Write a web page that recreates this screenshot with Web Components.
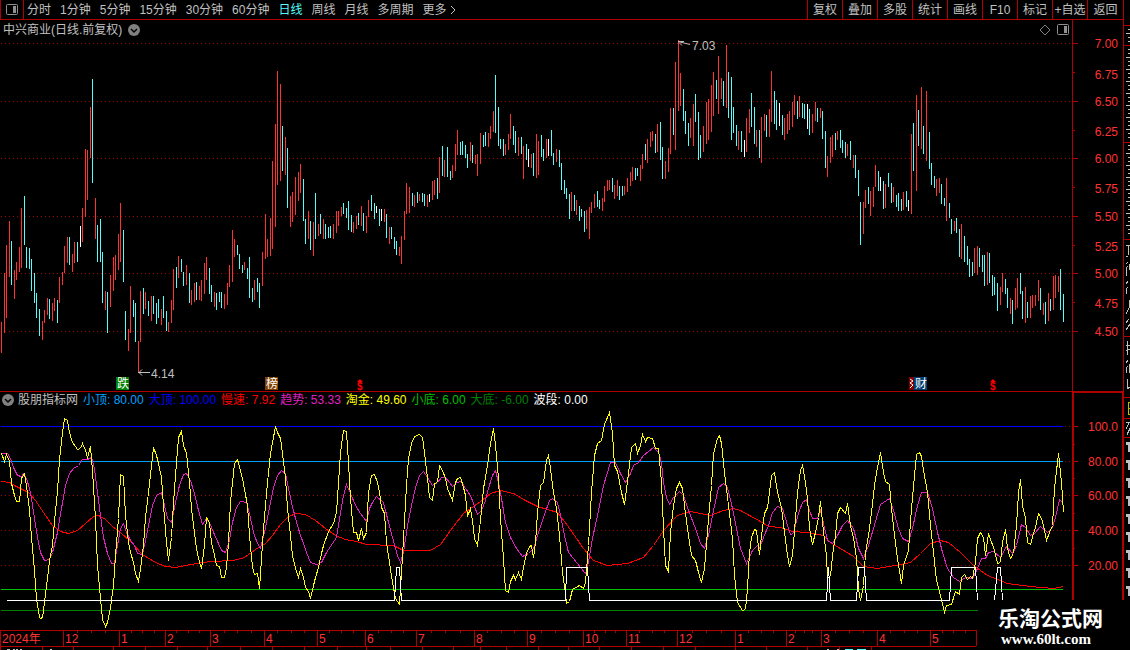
<!DOCTYPE html>
<html lang="zh-CN">
<head>
<meta charset="utf-8">
<title>中兴商业 日线</title>
<style>
  html, body {
    margin: 0;
    height: 100%;
    background: #000;
    overflow: hidden;
  }

  body {
    --line: #b00000;
    --grid: #a00000;
    --text: #c0c0c0;
    --up: #ff3232;
    --down: #54fcfc;
    font: 12px/14px "Liberation Sans", "Noto Sans CJK SC", sans-serif;
    color: var(--text);
  }
</style>
</head>
<body>
<stock-terminal></stock-terminal>

<script>
// Horizontal design width of a plot, data x values are given on this scale
const PLOT_WIDTH = 1072;

// Price bars: x, kind (r = up, c = down, w = flat), high, low
const BARS = `
1r322-353 4r273-333 6r245-318 9r221-277 11c241-285 14r270-299 16r262-280 19r247-272 21r208-268 24c196-245
26c247-268 29c248-269 31c259-291 34c273-303 36c293-318 39c309-336 42r321-340 44r310-323 47r298-315 49c299-319
52r303-321 54r298-311 57c300-323 59r277-303 62r272-285 64r246-273 67r237-263 69c237-265 72r254-272 74r242-263
77c242-262 80w226-247 82r208-242 85r149-217 87r150-200 90r107-158 92c79-183 95r198-239 97c225-262 100c219-262
102c252-303 105r291-310 107c292-333 110r275-307 113r257-291 115r255-280 118r234-270 120r203-262 123c230-282
125c311-340 128r329-351 130r286-333 133c300-317 135c303-342 138r341-372 140r291-342 143c288-314 145r292-309
148c301-316 151r296-321 153c296-314 156c303-324 158c299-318 161r309-325 163c296-318 166c311-331 168r322-332
171r300-323 173r269-310 176c267-288 178r256-278 181c259-272 183c272-286 186r265-285 189c273-303 191r290-305
194r283-302 196c282-300 199r286-300 201r280-301 204r263-294 206r257-280 209c268-294 211c285-302 214r292-307
216c293-310 219c292-302 221c292-308 224r294-309 227r283-305 229r265-287 232r230-282 234r239-257 237c245-255
239c254-269 242c265-273 244r262-270 247c268-279 249c257-298 252c288-302 254r280-300 257c278-292 259c283-308
262r252-286 265r214-259 267r239-257 270r218-256 272r161-249 275r124-227 277r71-185 280r84-181 282c126-171
285r137-175 287c148-208 290r196-227 292r192-222 295r177-215 298r172-201 300r164-193 303c179-221 305c219-244
308r211-239 310c221-250 313r222-256 315c193-239 318r224-236 320c214-234 323r219-239 325c224-239 328c227-238
330c226-238 333r224-239 336r211-233 338r211-226 341r207-216 343c203-214 346c208-218 348c201-230 351c215-232
353r222-233 356r216-229 358c213-225 361r206-226 363c213-231 366r216-233 368r200-217 371c195-211 374c203-219
376w206-213 379c209-226 381w209-221 384r209-222 386c214-238 389r227-244 391c227-239 394c237-249 396c241-255
399r247-256 401r236-264 404r211-240 406r183-214 409r187-213 412c193-206 414r195-207 417c192-203 419r194-201
422c193-202 424c194-206 427r195-207 429w194-202 432r181-200 434r180-195 437c178-199 439r157-193 442c146-176
444r160-177 447c147-177 450c171-180 452r165-178 455r144-171 457r130-155 460c142-155 462c141-155 465c145-158
467c154-168 470r142-161 472c145-163 475r155-164 477r154-176 480r133-164 483c135-147 485c132-146 488r133-147
490r126-139 493r111-132 495c75-133 498c107-146 500c139-149 503c139-156 505r144-155 508r134-150 510r114-139
513c126-145 515c131-153 518r137-156 521c137-154 523r146-179 526c144-160 528w149-167 531r154-168 533c153-176
536r134-178 538r141-175 541c135-157 543c149-161 546r139-158 548w139-156 551c130-156 553c153-165 556r149-162
559c150-167 561c163-190 564c180-194 566c188-199 569c194-219 571r192-211 574c195-211 576r200-215 579c206-221
581c209-217 584c211-232 586r210-229 589r207-239 591r202-213 594r194-208 597c191-207 599c200-209 602r198-211
604r186-202 607r180-191 609r180-190 612c178-192 614r185-199 617r180-196 619c186-200 622c186-196 624r186-195
627r178-192 630r172-186 632r167-181 635c168-180 637c168-176 640r165-181 642r154-169 645c144-160 647r139-163
650r132-147 652r131-141 655c134-153 657r124-152 660c122-160 662c147-179 665r161-179 668r148-172 670r108-154
673c108-135 675r62-150 678r40-111 680r73-106 683c89-121 685c111-134 688c123-146 690r118-138 693r104-146
695c94-122 698c112-160 700c135-158 703r126-152 706r102-144 708r99-140 711r85-132 713r72-116 716c80-99
718r56-114 721r78-99 723c81-106 726r45-108 728c72-118 731c77-140 733c107-133 736c125-146 738r131-150
741c131-152 744w140-157 746r118-152 749r109-133 751c93-127 754c107-144 756r130-147 759c130-158 761r117-163
764r114-131 766c115-137 769r109-137 771r71-122 774c91-124 776c100-130 779w103-126 782c115-135 784r118-140
787r114-134 789r111-130 792r102-127 794r95-115 797c101-119 799r96-117 802c103-118 804c104-119 807w104-129
809c109-135 812r114-133 815r102-121 817c108-122 820r108-118 822c111-139 825c131-168 827r156-177 830r137-163
832r135-157 835c133-150 837r131-140 840c130-148 842c140-153 845c142-158 847r144-156 850c141-160 853r155-168
855c155-178 858c170-196 860c202-245 863r202-234 865r190-208 868c187-204 870r191-216 873r187-207 875r165-187
878c171-191 880w177-191 883c181-209 885r184-208 888c173-187 891c183-203 893r187-202 896c195-207 898c193-211
901c199-211 903r192-210 906c191-207 908w200-211 911r134-214 913c123-171 916r95-191 918c110-146 921r87-149
923c126-154 926r91-161 929c132-169 931c163-185 934c176-188 936r179-196 939r178-193 941c184-204 944c198-206
946r178-221 949c203-218 951c219-234 954r221-231 956c218-233 959c229-257 961r224-259 964c236-262 967c246-265
969c259-277 972c262-276 974r248-273 977r246-275 979c248-267 982c255-272 984c255-286 987r252-285 989c253-283
992c275-296 994c277-295 997c283-311 1000r287-305 1002r273-292 1005c279-294 1007c288-308 1010r298-314
1012c300-324 1015r288-310 1017r278-308 1020c273-294 1022c291-319 1025r287-323 1027c302-318 1030r296-318
1032r295-308 1035r295-306 1038r280-301 1040c288-310 1043r303-315 1045c302-324 1048r293-321 1050c299-311
1053r276-310 1055r275-298 1058r276-292 1060c269-310 1063c294-322`;

// Indicator curves as x,y pairs
const SLOW = `1,481 9,482 16,486 22,489 28,492 35,500 43,512 52,525 60,531 68,533 77,530 85,523 93,516 98,515
105,519 112,526 120,532 130,541 142,554 155,562 165,566 175,567 190,564 210,561 233,560 244,557 255,549
265,543 272,535 280,524 288,516 296,513 305,514 315,520 325,528 335,535 345,539 356,541 366,544 393,545
403,550 430,550 440,544 450,530 463,513 480,501 490,493 500,490 513,493 525,500 537,506 557,512 567,525
583,548 593,560 607,565 627,563 643,557 653,545 663,530 677,515 690,511 710,515 723,510 733,508 740,510
749,515 760,521 768,526 780,527 792,531 807,532 823,535 830,542 853,556 863,566 877,568 900,564 910,562
920,553 930,543 940,540 948,542 960,552 973,565 987,575 1007,583 1030,586 1053,588 1063,586`;

const TREND = `1,453 7,453 10,458 13,467 17,475 21,476 23,473 26,478 29,488 31,498 34,518 37,537 40,552 44,560
49,559 52,552 57,532 61,508 65,485 69,473 73,468 78,465 82,459 87,459 91,457 94,468 97,492 100,515 103,537
107,553 111,563 114,563 117,545 120,528 123,523 126,532 130,540 134,545 137,553 142,554 145,540 148,525
152,505 156,495 161,492 164,505 167,518 171,522 175,502 179,485 183,474 186,473 190,480 194,493 198,510
202,524 206,518 209,522 213,532 218,543 221,550 225,552 229,540 232,522 236,507 240,501 246,502 249,513
253,532 257,543 260,548 264,532 268,512 273,487 277,475 281,470 285,473 287,483 291,502 295,518 300,535
303,543 306,552 310,562 316,564 321,562 326,552 336,537 339,518 343,495 346,484 350,493 355,505 360,513
366,521 369,508 372,502 376,496 383,502 388,522 392,537 397,555 400,562 403,552 407,525 411,505 415,487
419,475 423,471 427,477 432,485 437,482 441,477 445,477 449,482 452,486 456,482 461,481 465,488 470,495
473,503 477,514 481,510 485,500 488,488 492,475 495,470 498,482 501,498 505,522 510,537 516,548 522,556
528,553 533,548 538,532 543,517 549,500 552,498 557,502 560,515 564,535 568,552 573,558 580,567 585,573
588,562 592,538 597,515 603,485 610,462 615,462 620,473 625,482 630,473 633,465 638,462 643,455 653,447
658,452 661,462 663,482 666,497 669,504 673,497 679,491 683,495 688,510 695,528 700,543 704,548 708,535
713,510 718,487 723,483 727,487 732,508 736,528 740,548 746,563 752,550 757,545 759,548 763,537 768,525
772,512 777,506 782,508 787,525 790,534 793,533 798,513 802,502 806,499 808,507 812,518 817,518 820,510
823,523 827,540 832,543 837,535 842,525 847,520 853,528 858,548 863,558 868,545 873,528 880,504 889,498
893,510 898,528 902,538 908,541 912,528 917,505 921,492 927,492 932,508 937,532 942,552 947,568 953,577
959,581 965,577 972,578 977,568 981,558 985,558 988,552 993,551 1000,557 1006,546 1012,553 1016,545
1021,524 1025,527 1030,535 1035,532 1040,526 1047,532 1052,527 1056,513 1059,499 1063,503`;

const FAST = `1,453 4,461 6,454 9,461 11,483 14,495 16,501 19,501 21,478 24,473 26,485 29,509 31,537 34,570
36,598 39,617 40,618 42,617 44,602 47,578 49,560 52,545 54,521 57,490 59,459 62,432 64,418 67,420 69,432
72,442 75,446 77,449 80,448 82,443 85,450 87,457 90,446 92,470 95,518 97,565 100,598 102,619 105,626
107,622 110,607 113,585 115,555 118,518 120,474 123,476 125,515 128,542 130,552 133,562 135,573 138,581
140,568 143,545 145,517 148,492 151,465 153,447 156,455 158,463 161,477 163,505 166,542 168,560 171,537
173,502 176,462 178,437 181,431 183,445 186,453 189,482 191,508 194,532 196,548 199,562 201,568 204,545
206,517 209,522 211,542 214,555 216,565 219,566 221,577 224,577 226,567 228,542 230,502 232,482 234,463
237,459 242,478 247,505 249,535 252,567 254,574 257,573 259,588 261,558 263,528 265,505 267,482 270,453
275,426 277,432 280,438 282,453 285,478 287,508 290,535 292,555 295,568 298,577 300,568 303,577 305,587
308,591 310,598 313,585 315,577 318,567 321,553 323,545 328,531 333,523 336,512 338,482 340,452 343,430
346,431 348,462 350,498 353,532 356,532 358,540 361,528 363,538 366,532 368,492 371,475 374,474 377,482
379,492 381,507 384,513 386,542 389,562 392,582 395,598 399,604 401,572 403,538 406,485 408,458 411,443
414,436 419,434 422,437 424,452 427,478 429,497 432,500 434,483 437,482 439,465 442,470 445,478 447,488
452,500 455,482 457,478 460,477 463,487 465,495 467,516 470,508 472,520 474,538 477,545 480,520 483,488
487,465 490,443 493,428 495,445 498,478 500,518 503,558 505,590 508,592 510,581 513,575 515,579 518,572
521,579 523,567 526,553 529,546 531,545 533,557 535,542 537,512 540,485 543,482 546,460 548,455 550,468
553,492 556,508 559,535 562,572 565,593 566,603 569,601 572,589 579,585 583,588 585,582 588,545 591,492
594,455 597,443 601,440 604,424 609,412 612,433 614,465 617,471 621,492 624,504 628,473 631,447 635,443
637,453 640,445 642,434 645,441 647,437 652,438 655,448 658,448 661,482 663,528 665,565 668,571 670,532
673,505 676,488 679,482 682,488 685,513 688,535 691,555 695,560 698,572 701,582 704,568 708,518 711,485
713,453 717,438 719,435 721,443 724,472 728,505 732,538 734,575 737,602 742,610 745,609 747,588 749,552
751,537 754,529 756,530 759,554 761,535 764,513 767,507 769,492 771,475 774,472 777,492 781,507 784,532
787,555 789,566 792,555 795,518 797,492 800,470 802,465 805,482 807,498 809,528 812,544 815,532 818,517
820,501 823,532 826,555 827,578 830,576 832,555 835,535 837,513 840,507 845,513 847,503 850,525 853,537
856,558 858,588 860,600 863,585 865,552 868,535 871,512 874,485 877,467 880,452 883,472 885,481 889,484
891,508 894,535 897,558 901,583 903,565 908,550 911,508 914,475 916,454 919,452 921,456 923,470 927,492
930,525 933,552 936,580 940,595 944,612 946,605 951,604 955,591 959,594 961,577 964,574 967,579 970,576
972,578 975,562 977,538 980,532 983,537 985,555 988,533 994,550 997,563 1000,562 1002,542 1005,529
1007,548 1010,558 1013,553 1016,525 1018,492 1020,479 1022,505 1025,518 1027,542 1030,544 1033,533
1035,527 1038,513 1041,518 1043,525 1046,540 1049,532 1052,525 1054,488 1058,453 1061,482 1063,512`;

const WAVE = `6,600 394,600 396,567 399,567 401,600 565,600 566,567 587,567 589,600 826,600 828,567 830,600
856,600 858,567 864,567 866,600 949,600 951,567 975,567 977,600`;
const WAVE_TAIL = '994,600 997,567 1000,567 1002,600';

const PRICES = [
  ['7.00', 43], ['6.75', 74], ['6.50', 101], ['6.25', 131], ['6.00', 158], ['5.75', 188],
  ['5.50', 216], ['5.25', 246], ['5.00', 273], ['4.75', 303], ['4.50', 331]
];
const LEVELS = [['100.0', 426], ['80.00', 461], ['60.00', 495], ['40.00', 530], ['20.00', 565]];

const MONTHS = [
  [0, '2024年'], [63, '12'], [119, '1'], [165, '2'], [210, '3'], [264, '4'], [317, '5'], [365, '6'],
  [416, '7'], [474, '8'], [527, '9'], [583, '10'], [626, '11'], [677, '12'], [735, '1'], [786, '2'],
  [821, '3'], [877, '4'], [930, '5'], [976, '']
];
const LOWER_TICKS = [
  0, 42, 73, 113, 145, 177, 207, 240, 272, 304, 337, 366, 390, 422, 453, 480, 506, 538, 568, 599,
  631, 663, 695, 735, 766, 807, 839, 871
];

const LEGEND = [
  ['小顶', '80.00', '#00a0ff'], ['大顶', '100.00', '#0000ff'], ['慢速', '7.92', '#ff0000'],
  ['趋势', '53.33', '#e020c0'], ['淘金', '49.60', '#ffff00'], ['小底', '6.00', '#00c000'],
  ['大底', '-6.00', '#008000'], ['波段', '0.00', '#ffffff']
];

const CHEVRON_BADGE = `
  <svg width="12" height="12" viewBox="0 0 12 12" aria-hidden="true">
    <circle cx="6" cy="6" r="6" fill="#808080"/>
    <path d="M3 5l3 3 3-3" fill="none" stroke="#000" stroke-width="1.5"/>
  </svg>`;

const PANE_ICON = `
  <svg width="13" height="12" viewBox="0 0 13 12" aria-hidden="true">
    <rect x="0.5" y="0.5" width="11" height="10" rx="1" fill="none" stroke="#909090"/>
    <rect x="7" y="2" width="3" height="7" fill="#909090"/>
  </svg>`;

// Base class: an SVG that is redrawn when its width changes
class PlotElement extends HTMLElement {
  constructor() {
    super();
    this.attachShadow({ mode: 'open' });
  }

  connectedCallback() {
    this.render();
    this._observer = new ResizeObserver(() => this.render());
    this._observer.observe(this);
  }

  disconnectedCallback() {
    this._observer.disconnect();
  }

  get ratio() {
    return (this.clientWidth || PLOT_WIDTH) / PLOT_WIDTH;
  }

  x(value) {
    return Math.round(value * this.ratio);
  }

  polyline(points, color) {
    const shifted = points.trim().split(/\s+/).map(pair => {
      const [px, py] = pair.split(',').map(Number);
      return `${this.x(px) + 0.5},${py + 0.5}`;
    }).join(' ');
    return `<polyline points="${shifted}" fill="none" stroke="${color}"/>`;
  }

  hline(y, x1, x2, color) {
    return `<path d="M${this.x(x1)} ${y}.5H${this.x(x2)}" stroke="${color}"/>`;
  }

  dotted(y) {
    return `<path d="M1 ${y}.5H${this.x(PLOT_WIDTH)}" stroke="var(--grid)" stroke-dasharray="1 3"/>`;
  }

  draw(top, height, content) {
    this.shadowRoot.innerHTML = `
    <style>
      :host {
        display: block;
        overflow: hidden;
      }

      svg {
        display: block;
        width: 100%;
        height: ${height}px;
        font: inherit;
      }

      .lines {
        shape-rendering: crispEdges;
      }
    </style>
    <svg><g transform="translate(0 ${-top})">${content}</g></svg>
  `;
  }
}

class PriceChart extends PlotElement {
  render() {
    const fills = { r: 'var(--up)', c: 'var(--down)', w: '#fff' };
    const bars = BARS.trim().split(/\s+/).map(item => {
      const [, bx, kind, high, low] = item.match(/(\d+)([rcw])(\d+)-(\d+)/);
      return `<rect x="${this.x(bx)}" y="${high}" width="1" height="${low - high}" fill="${fills[kind]}"/>`;
    }).join('');
    const grid = [43, 101, 158, 216, 273, 331].map(y => this.dotted(y)).join('');

    this.draw(20, 371, `
      <g class="lines">${grid}${bars}</g>
      <g fill="none" stroke="#c0c0c0">
        <path d="M${this.x(138)} 372.5h12m-8-3l-3 3 3 3"/>
        <path d="M${this.x(678)} 41.5l6 0m-6 0l12 3m-11-2l3 3"/>
      </g>
      <g fill="#c0c0c0">
        <text x="${this.x(151)}" y="378">4.14</text>
        <text x="${this.x(692)}" y="50">7.03</text>
      </g>
      ${this.mark(116, '跌', '#008000')}
      ${this.mark(265, '榜', '#804000')}
      <rect x="${this.x(909)}" y="377" width="5" height="13" fill="#800000"/>
      <path d="M${this.x(910)} 379l3 2-3 2 3 2-3 3" fill="none" stroke="#fff"/>
      ${this.mark(914, '财', '#003c70')}
      ${this.dividend(357)}
      ${this.dividend(990)}
    `);
  }

  mark(x, label, color) {
    const left = this.x(x);
    return `
      <rect x="${left}" y="377" width="13" height="13" fill="${color}"/>
      <text x="${left + 1}" y="388" fill="#fff">${label}</text>`;
  }

  dividend(x) {
    const left = this.x(x);
    return `
      <path d="M${left} 382l3-3 3 3z" fill="#f00"/>
      <text x="${left}" y="390" fill="#f00" font-size="10" font-weight="bold">$</text>`;
  }
}

class IndicatorChart extends PlotElement {
  render() {
    const grid = [426, 461, 495, 530, 565].map(y => this.dotted(y)).join('');
    this.draw(392, 238, `
      <g class="lines">
        ${grid}
        ${this.hline(426, 1, 1063, '#0000ff')}
        ${this.hline(461, 1, 1063, '#00a0ff')}
        ${this.hline(589, 1, 1063, '#00c000')}
        ${this.hline(610, 1, 978, '#008000')}
        ${this.polyline(SLOW, '#ff0000')}
        ${this.polyline(TREND, '#e020c0')}
        ${this.polyline(FAST, '#ffff00')}
        ${this.polyline(WAVE, '#ffffff')}
        ${this.polyline(WAVE_TAIL, '#ffffff')}
      </g>
    `);
  }
}

class TimeAxis extends PlotElement {
  render() {
    const end = this.x(976);
    const separators = MONTHS.map(([mx]) => `M${this.x(mx)}.5 630v16`).join('');
    // Three week marks between two month separators
    const weeks = MONTHS.slice(1, -1).map(([mx], i) => {
      const next = MONTHS[i + 2][0];
      return [1, 2, 3].map(q => `M${this.x(mx + (next - mx) * q / 4)}.5 630v3`).join('');
    }).join('');
    const labels = MONTHS.map(([mx, label]) =>
      label ? `<text x="${this.x(mx) + 2}" y="643">${label}</text>` : '').join('');
    const lower = LOWER_TICKS.map(t => `M${this.x(t)}.5 647v3`).join('');

    this.draw(630, 20, `
      <path class="lines" fill="none" stroke="var(--line)"
        d="M0 630.5H${end}M0 646.5H${end}${separators}${weeks}${lower}"/>
      <g class="lines">
        <path d="M7 649.5h3m3 0h2m1 0h2m2 0h2m28 0h2" stroke="#c0c0c0"/>
        <path d="M${this.x(827)} 649.5h2m8 0h2" stroke="#c0c0c0"/>
        <path d="M${this.x(845)} 649.5h8m4 0h9" stroke="#54fcfc"/>
      </g>
      <g fill="var(--up)">${labels}</g>
    `);
  }
}

// Value scale to the right of a plot. <value-axis scale="price|level">
class ValueAxis extends HTMLElement {
  constructor() {
    super();
    this.attachShadow({ mode: 'open' });
  }

  connectedCallback() {
    const price = this.getAttribute('scale') === 'price';
    const top = price ? 20 : 392;
    const height = price ? 371 : 208;
    const labels = price ? PRICES : LEVELS;
    const major = price ? [43, 101, 158, 216, 273, 331] : [426, 461, 495, 530, 565];
    const minor = price ? [72, 130, 187, 245, 302] : [444, 478, 513, 548];
    const frame = price
      ? `<path d="M0.5 ${top}V391" stroke="var(--line)"/>`
      : `<path d="M1 600V392H51V600" stroke="var(--line)" stroke-width="2"/>`;

    this.shadowRoot.innerHTML = `
    <style>
      :host {
        display: block;
      }

      svg {
        display: block;
        width: 100%;
        font: inherit;
        overflow: visible;
      }
    </style>
    <svg height="${height}">
      <g transform="translate(0 ${-top})">
        <g fill="none" shape-rendering="crispEdges">
          ${frame}
          <path stroke="var(--line)" d="${major.map(y => `M1 ${y}.5h5`).join('')}${minor.map(y => `M1 ${y}.5h2`).join('')}"/>
        </g>
        <g fill="var(--up)" text-anchor="end">
          ${labels.map(([label, y]) => `<text x="46" y="${y + 5}">${label}</text>`).join('')}
        </g>
      </g>
    </svg>
  `;
  }
}

class ChartToolbar extends HTMLElement {
  constructor() {
    super();
    this.attachShadow({ mode: 'open' });
    this._periods = ['分时', '1分钟', '5分钟', '15分钟', '30分钟', '60分钟', '日线', '周线', '月线', '多周期'];
    this._tools = ['复权', '叠加', '多股', '统计', '画线', 'F10', '标记', '+自选', '返回'];
    this._active = '日线';
  }

  connectedCallback() {
    this.render();
  }

  render() {
    this.shadowRoot.innerHTML = `
    <style>
      :host {
        display: flex;
        justify-content: space-between;
        height: 19px;
        border-bottom: 1px solid var(--line);
      }

      nav {
        display: flex;
      }

      .periods {
        gap: 9px;
      }

      button {
        display: flex;
        align-items: center;
        justify-content: center;
        gap: 3px;
        padding: 0;
        border: 0;
        background: none;
        font: inherit;
        color: inherit;
        white-space: nowrap;
      }

      button.active {
        color: var(--down);
      }

      .pane {
        box-sizing: border-box;
        width: 24px;
        margin-right: -6px;
        border: solid var(--line);
        border-width: 0 1px;
      }

      .tools button {
        box-sizing: border-box;
        width: 35px;
        border-left: 1px solid var(--line);
      }

      .tools button:last-child {
        width: 36px;
      }
    </style>
    <nav class="periods">
      <button class="pane" aria-label="侧栏">${PANE_ICON}</button>
      ${this._periods.map(p => `<button class="period ${p === this._active ? 'active' : ''}">${p}</button>`).join('')}
      <button>更多<svg width="6" height="10" viewBox="0 0 6 10" aria-hidden="true"><path d="M1 1l4 4-4 4" fill="none" stroke="#c0c0c0"/></svg></button>
    </nav>
    <nav class="tools">${this._tools.map(t => `<button>${t}</button>`).join('')}</nav>
  `;

    this.shadowRoot.querySelectorAll('.period').forEach(button => {
      button.addEventListener('click', () => {
        this._active = button.textContent;
        this.render();
      });
    });
  }
}

// Plot panel: header slot over the chart, scale on the right
class ChartPanel extends HTMLElement {
  constructor() {
    super();
    this.attachShadow({ mode: 'open' });
    this.shadowRoot.innerHTML = `
    <style>
      :host {
        display: grid;
        grid-template-columns: 1fr 51px;
      }

      .plot {
        position: relative;
        min-width: 0;
      }

      ::slotted([slot="header"]) {
        position: absolute;
        inset: 0 0 auto 0;
      }
    </style>
    <div class="plot"><slot></slot><slot name="header"></slot></div>
    <slot name="axis"></slot>
  `;
  }
}

class ChartTitle extends HTMLElement {
  constructor() {
    super();
    this.attachShadow({ mode: 'open' });
    this.shadowRoot.innerHTML = `
    <style>
      :host {
        display: flex;
        align-items: center;
        gap: 6px;
        height: 19px;
        padding: 0 2px 0 3px;
      }

      button {
        display: flex;
        padding: 0;
        border: 0;
        background: none;
      }

      .diamond {
        margin-left: auto;
      }
    </style>
    <span><slot></slot></span>
    <button aria-label="展开">${CHEVRON_BADGE}</button>
    <button class="diamond" aria-label="标注"><svg width="12" height="12" viewBox="0 0 12 12"><path d="M6 1l5 5-5 5-5-5z" fill="none" stroke="#808080"/></svg></button>
    <button aria-label="窗格">${PANE_ICON}</button>
  `;
  }
}

class IndicatorLegend extends HTMLElement {
  constructor() {
    super();
    this.attachShadow({ mode: 'open' });
    this.shadowRoot.innerHTML = `
    <style>
      :host {
        display: flex;
        align-items: center;
        gap: 5px;
        height: 16px;
        padding-left: 2px;
        white-space: nowrap;
      }

      button {
        display: flex;
        gap: 4px;
        align-items: center;
        padding: 0;
        border: 0;
        background: none;
        font: inherit;
        color: inherit;
      }
    </style>
    <button>${CHEVRON_BADGE}<slot></slot></button>
    ${LEGEND.map(([name, value, color]) => `<span style="color: ${color}">${name}: ${value}</span>`).join('')}
  `;
  }
}

// Left edge of the quote pane, cut off by the window border
class QuoteEdge extends HTMLElement {
  constructor() {
    super();
    this.attachShadow({ mode: 'open' });
  }

  connectedCallback() {
    const rules = [25, 45, 142, 239, 336].map(y => `M0 ${y}.5h7`).join('');
    let rows = '';
    for (let y = 29; y < 236; y += 4) {
      const near = [45, 142].some(rule => Math.abs(rule - y) < 3);
      if (!near) rows += y % 3 ? `M5 ${y}.5h2` : `M3 ${y}.5h4`;
    }
    const columns = [
      [245, 'M3 0h4M5 0v10M3 11h2'], [262, 'M5 0l-2 2m2 2l-2 2v8m3-12v6'], [281, 'M5 0l-2 3m2 3l-2 2v5m4-9v8'],
      [300, 'M6 0v8l-3 6'], [319, 'M6 0l-3 4m4 1l-4 6m4-3v6'], [341, 'M4 0v14m-1-10h4m-4 6l4-2'],
      [360, 'M5 0l-2 3m2 3l-2 2v5m3-9v9'], [379, 'M4 0v10l3-2']
    ].map(([y, d]) => `<path transform="translate(0 ${y})" d="${d}"/>`).join('');
    let figures = '';
    for (let y = 442; y < 590; y += 18) figures += `<path d="M3 ${y}h4v10h-2v-7h-2z"/>`;

    this.shadowRoot.innerHTML = `
    <style>
      :host {
        display: block;
        width: 7px;
        overflow: hidden;
      }

      svg {
        display: block;
      }
    </style>
    <svg width="7" height="600" fill="none" shape-rendering="crispEdges">
      <path d="M0.5 0V392" stroke="var(--line)"/>
      <path d="${rules}M1 397.5h6M1 418.5h6M1 437.5h6" stroke="var(--line)"/>
      <path d="${rows}" stroke="#c0c0c0"/>
      <g stroke="#c0c0c0">${columns}<path d="M3 422.5h4m-1 1l-3 5m4 0l-3 6"/></g>
      <path d="M7 402.5h-2v12h2m-2-6h2" stroke="#c0c000"/>
      <g fill="#c0c0c0">${figures}</g>
    </svg>
  `;
  }
}

class SiteMark extends HTMLElement {
  constructor() {
    super();
    this.attachShadow({ mode: 'open' });
    this.shadowRoot.innerHTML = `
    <style>
      :host {
        display: flex;
        flex-direction: column;
        box-sizing: border-box;
        padding: 8px 0 0 20px;
        background: #000;
        color: #fff;
        font-weight: bold;
      }

      .name {
        font-size: 21px;
        line-height: 22px;
      }

      a {
        padding-left: 3px;
        font: bold 15px/18px "Liberation Serif", serif;
        color: inherit;
        text-decoration: none;
      }
    </style>
    <span class="name"><slot></slot></span>
    <a href="#">www.60lt.com</a>
  `;
  }
}

class StockTerminal extends HTMLElement {
  constructor() {
    super();
    this.attachShadow({ mode: 'open' });
    this.shadowRoot.innerHTML = `
    <style>
      :host {
        display: grid;
        grid-template-columns: 1fr 7px;
        position: relative;
      }

      main {
        min-width: 0;
      }

      .price {
        border-bottom: 1px solid var(--line);
      }

      time-axis {
        margin-right: 51px;
      }

      site-mark {
        position: absolute;
        right: 0;
        bottom: 0;
        width: 152px;
        height: 50px;
      }
    </style>
    <main>
      <chart-toolbar></chart-toolbar>
      <chart-panel class="price">
        <price-chart></price-chart>
        <chart-title slot="header">中兴商业(日线.前复权)</chart-title>
        <value-axis slot="axis" scale="price"></value-axis>
      </chart-panel>
      <chart-panel>
        <indicator-chart></indicator-chart>
        <indicator-legend slot="header">股朋指标网</indicator-legend>
        <value-axis slot="axis" scale="level"></value-axis>
      </chart-panel>
      <time-axis></time-axis>
    </main>
    <quote-edge></quote-edge>
    <site-mark>乐淘公式网</site-mark>
  `;
  }
}

customElements.define('price-chart', PriceChart);
customElements.define('indicator-chart', IndicatorChart);
customElements.define('time-axis', TimeAxis);
customElements.define('value-axis', ValueAxis);
customElements.define('chart-toolbar', ChartToolbar);
customElements.define('chart-panel', ChartPanel);
customElements.define('chart-title', ChartTitle);
customElements.define('indicator-legend', IndicatorLegend);
customElements.define('quote-edge', QuoteEdge);
customElements.define('site-mark', SiteMark);
customElements.define('stock-terminal', StockTerminal);
</script>
</body>
</html>
